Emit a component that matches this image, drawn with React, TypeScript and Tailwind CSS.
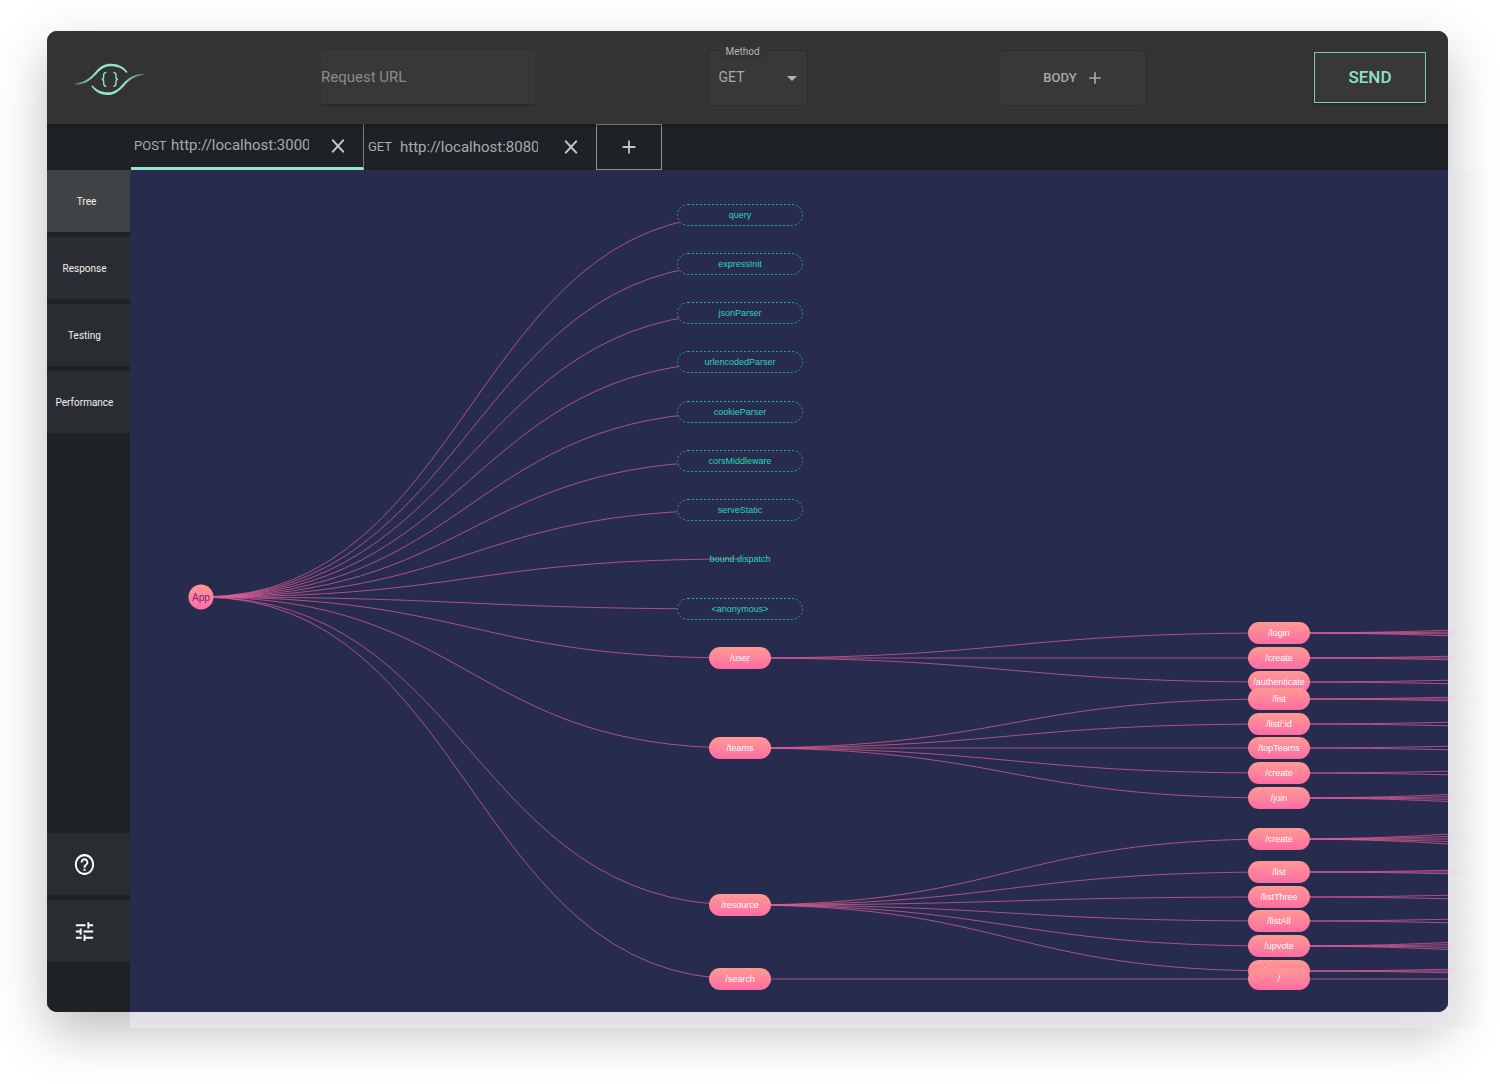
import { MdAdd, MdArrowDropDown, MdClose, MdHelpOutline, MdTune } from "react-icons/md";

type Kind = "root" | "middleware" | "plain" | "route";
type TreeNode = { label: string; x: number; y: number; kind: Kind };

const COL_0 = 71;
const COL_1 = 610;
const COL_2 = 1149;
const COL_3 = 1688;

const root: TreeNode = { label: "App", x: COL_0, y: 427, kind: "root" };

const layers: TreeNode[] = [
  { label: "query", x: COL_1, y: 45, kind: "middleware" },
  { label: "expressInit", x: COL_1, y: 94, kind: "middleware" },
  { label: "jsonParser", x: COL_1, y: 143, kind: "middleware" },
  { label: "urlencodedParser", x: COL_1, y: 192, kind: "middleware" },
  { label: "cookieParser", x: COL_1, y: 242, kind: "middleware" },
  { label: "corsMiddleware", x: COL_1, y: 291, kind: "middleware" },
  { label: "serveStatic", x: COL_1, y: 340, kind: "middleware" },
  { label: "bound dispatch", x: COL_1, y: 389, kind: "plain" },
  { label: "<anonymous>", x: COL_1, y: 439, kind: "middleware" },
];

type Route = { label: string; y: number; children: { label: string; y: number; leaves: number[] }[] };

const routes: Route[] = [
  {
    label: "/user",
    y: 488,
    children: [
      { label: "/login", y: 463, leaves: [-16, -5, 5, 16] },
      { label: "/create", y: 488, leaves: [-10, 0, 10] },
      { label: "/authenticate", y: 512, leaves: [-10, 10] },
    ],
  },
  {
    label: "/teams",
    y: 578,
    children: [
      { label: "/list", y: 529, leaves: [-10, 0, 10] },
      { label: "/list/:id", y: 554, leaves: [-10, 10] },
      { label: "/topTeams", y: 578, leaves: [-10, 10] },
      { label: "/create", y: 603, leaves: [-10, 10] },
      { label: "/join", y: 628, leaves: [-20, -7, 7, 20] },
    ],
  },
  {
    label: "/resource",
    y: 735,
    children: [
      { label: "/create", y: 669, leaves: [-28, -14, 0, 14, 28] },
      { label: "/list", y: 702, leaves: [-10, 0, 10] },
      { label: "/listThree", y: 727, leaves: [-10, 10] },
      { label: "/listAll", y: 751, leaves: [-10, 10] },
      { label: "/upvote", y: 776, leaves: [-20, -7, 7, 20] },
      { label: "/remove", y: 801, leaves: [-10, 0, 10] },
    ],
  },
  { label: "/search", y: 809, children: [{ label: "/", y: 809, leaves: [0] }] },
];

const nodes: TreeNode[] = [
  root,
  ...layers,
  ...routes.map((r) => ({ label: r.label, x: COL_1, y: r.y, kind: "route" as Kind })),
  ...routes.flatMap((r) => r.children.map((c) => ({ label: c.label, x: COL_2, y: c.y, kind: "route" as Kind }))),
];

function link(x0: number, y0: number, x1: number, y1: number) {
  const mid = (x0 + x1) / 2;
  return `M${x0} ${y0}C${mid} ${y0} ${mid} ${y1} ${x1} ${y1}`;
}

const links: string[] = [
  ...layers.map((n) => link(COL_0, root.y, n.x, n.y)),
  ...routes.map((r) => link(COL_0, root.y, COL_1, r.y)),
  ...routes.flatMap((r) => r.children.map((c) => link(COL_1, r.y, COL_2, c.y))),
  ...routes.flatMap((r) => r.children.flatMap((c) => c.leaves.map((d) => link(COL_2, c.y, COL_3, c.y + d)))),
];

const nodeStyle: Record<Kind, string> = {
  root: "h-[25px] w-[25px] bg-linear-to-b from-[#ff9a92] to-[#ff6ba3] text-[10px] text-[#7b2382]",
  middleware: "h-[22px] w-[126px] bg-[#272b4d] text-[9px] text-[#2fd6ae]",
  plain: "h-[22px] w-[126px] text-[9px] text-[#2fd6ae]",
  route: "h-[22px] w-[62px] bg-linear-to-b from-[#ff9a92] to-[#ff6ba3] text-[9px] text-white",
};

function Links({ className }: { className: string }) {
  return (
    <svg className={className} width="1700" height="842" fill="none" stroke="#e0609a" strokeOpacity="0.72" aria-hidden="true">
      {links.map((d, i) => (
        <path key={i} d={d} />
      ))}
    </svg>
  );
}

function Tree() {
  return (
    <section aria-label="Route tree" className="relative min-h-[842px] flex-1 overflow-hidden rounded-tl-lg bg-[#272b4d] font-['Liberation_Sans',Arial,sans-serif]">
      <Links className="absolute top-0 left-0 max-w-none" />
      {nodes.map((n, i) => (
        <div
          key={i}
          className={`absolute flex -translate-x-1/2 -translate-y-1/2 items-center justify-center rounded-full leading-3 whitespace-nowrap ${nodeStyle[n.kind]}`}
          style={{ left: n.x, top: n.y }}
        >
          {n.kind === "middleware" && (
            <svg className="absolute inset-0" width="126" height="22" fill="none" aria-hidden="true">
              <rect x="0.5" y="0.5" width="125" height="21" rx="10.5" stroke="#2aa893" strokeDasharray="2 2" />
            </svg>
          )}
          {n.label}
        </div>
      ))}
    </section>
  );
}

function Logo() {
  return (
    <svg className="h-[34px] w-[69px]" viewBox="102 123 207 102" preserveAspectRatio="none" role="img" aria-label="Logo">
      <defs>
        <linearGradient id="tailL" x1="0" x2="1">
          <stop offset="0" stopColor="#8fe8cb" stopOpacity="0.35" />
          <stop offset="0.35" stopColor="#8fe8cb" />
        </linearGradient>
        <linearGradient id="tailR" x1="0" x2="1">
          <stop offset="0.6" stopColor="#8fe8cb" />
          <stop offset="1" stopColor="#8fe8cb" stopOpacity="0.35" />
        </linearGradient>
      </defs>
      <path
        fill="url(#tailL)"
        d="M103 187C132 184 147 171 163 153C178 135 191 128 210 128C232 128 248 137 260 153L256 156C244 142 230 136 210 136C192 136 182 142 167 158C148 178 133 190 103 191Z"
      />
      <path
        fill="url(#tailR)"
        d="M308 158C280 159 262 170 246 188C231 206 218 214 200 214C180 214 166 207 154 193L151 196C162 211 177 222 198 222C219 222 233 212 250 194C266 176 280 165 308 162Z"
      />
      <g fill="none" stroke="#8fe8cb" strokeWidth="4">
        <path d="M196 154C189 154 188 157 188 163V168C188 173 186 175 182 175C186 175 188 177 188 182V187C188 193 189 196 196 196" />
        <path d="M217 154C224 154 225 157 225 163V168C225 173 227 175 231 175C227 175 225 177 225 182V187C225 193 224 196 217 196" />
      </g>
    </svg>
  );
}

function Header() {
  return (
    <header className="relative z-10 grid h-[93px] grid-cols-[216fr_330fr_329fr_300fr_226fr] items-center bg-[#333333] shadow-[0_1px_5px_rgba(0,0,0,0.35)]">
      <div className="pt-0.5 pl-7">
        <Logo />
      </div>
      <input
        aria-label="Request URL"
        placeholder="Request URL"
        className="h-[56px] w-[214px] justify-self-center border-b-2 border-[#2a2a2a] bg-[#383838] text-[15px] text-[#b5b5b5] outline-none placeholder:text-[#8c8c8c]"
      />
      <div className="relative justify-self-center">
        <label htmlFor="method" className="absolute -top-1 left-3 bg-[#353535] px-1.5 text-[10px] leading-3 text-[#b5b5b5]">
          Method
        </label>
        <select
          id="method"
          defaultValue="GET"
          className="h-[56px] w-[100px] appearance-none rounded border border-[#2c2c2c] bg-[#383838] pl-2.5 text-[14px] text-[#aaaaaa]"
        >
          <option>GET</option>
          <option>POST</option>
          <option>PUT</option>
          <option>DELETE</option>
        </select>
        <MdArrowDropDown className="pointer-events-none absolute top-4 right-1 size-6 text-[#b5b5b5]" />
      </div>
      <button className="flex h-[56px] w-[149px] items-center justify-center gap-2 justify-self-center rounded border border-[#2c2c2c] bg-[#383838] pl-1 text-[13px] font-medium text-[#a8a8a8]">
        BODY
        <MdAdd className="size-[20px]" />
      </button>
      <button className="mr-[22px] h-[51px] w-[112px] justify-self-end border border-[#7fcdb4] bg-[#383838] text-[17px] font-medium text-[#8fe3c8] shadow-[0_1px_2px_rgba(0,0,0,0.4)]">
        SEND
      </button>
    </header>
  );
}

function Tab({ method, url, active }: { method: string; url: string; active?: boolean }) {
  return (
    <div
      className={`flex items-center ${active ? "w-[233px] border-r border-b-[3px] border-r-[#77797b] border-b-[#8fe8cb] pl-[3px]" : "w-[232px] pl-1"}`}
    >
      <span className={`text-[13px] text-[#a9abac] ${active ? "w-[37px]" : "w-8"}`}>{method}</span>
      <input aria-label={`${method} URL`} defaultValue={url} className="w-[138px] bg-transparent text-[15px] text-[#a9abac] outline-none" />
      <button aria-label={`Close ${method} tab`} className="mr-3.5 ml-auto text-[#c4c6c7]">
        <MdClose className="h-[24px] w-[22px]" preserveAspectRatio="none" />
      </button>
    </div>
  );
}

const navItem = "flex h-[62px] items-center justify-center pr-2 text-[10px] text-[#f1f1f1]";

function Sidebar() {
  return (
    <nav className="flex w-[83px] flex-col gap-[5px] bg-[#1e2125] pb-[50px]">
      <button className="flex h-[62px] items-center justify-center bg-[#404345] pr-1 text-[10px] text-[#f1f1f1]">Tree</button>
      <button className={`${navItem} bg-[#292c30]`}>Response</button>
      <button className={`${navItem} bg-[#292c30]`}>Testing</button>
      <button className={`${navItem} bg-[#292c30]`}>Performance</button>
      <button aria-label="Help" className={`${navItem} mt-auto bg-[#292c30]`}>
        <MdHelpOutline className="h-[25px] w-[23px] text-white" preserveAspectRatio="none" />
      </button>
      <button aria-label="Settings" className={`${navItem} bg-[#292c30]`}>
        <MdTune className="h-[25px] w-[23px] text-white" preserveAspectRatio="none" />
      </button>
    </nav>
  );
}

export default function App() {
  return (
    <div className="flex min-h-screen flex-col overflow-hidden bg-white pt-[31px] pr-[52px] pb-[72px] pl-[47px] font-[Roboto,sans-serif]">
      <div className="relative flex flex-1 flex-col">
        <div className="absolute inset-0 rounded-[10px] shadow-[0_20px_52px_rgba(0,0,0,0.26)]" />
        <div className="absolute top-[139px] -right-[52px] -bottom-4 left-[83px] overflow-hidden bg-[#e6e6ee]/75 mask-r-from-95% mask-r-to-99%">
          <Links className="max-w-none opacity-15" />
        </div>
        <div className="relative flex flex-1 flex-col overflow-hidden rounded-[10px] bg-[#1e2125]">
          <Header />
          <div className="flex h-[46px] bg-[#1e2125] pl-[84px]">
            <Tab method="POST" url="http://localhost:3000" active />
            <Tab method="GET" url="http://localhost:8080" />
            <button aria-label="New tab" className="flex w-[66px] items-center justify-center border border-[#8f9192] text-[#c4c6c7]">
              <MdAdd className="size-[22px]" />
            </button>
          </div>
          <div className="flex flex-1 bg-[#333333]">
            <Sidebar />
            <Tree />
          </div>
        </div>
      </div>
    </div>
  );
}
